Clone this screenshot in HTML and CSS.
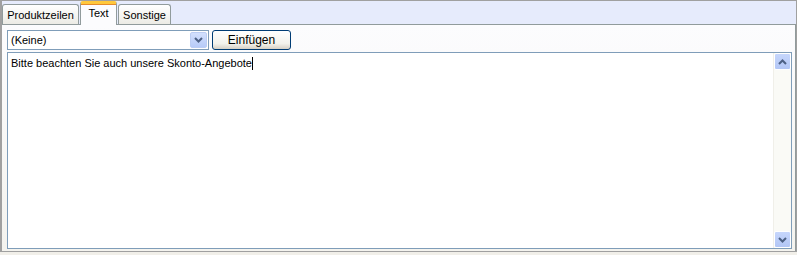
FILE: index.html
```html
<!DOCTYPE html>
<html lang="de">
<head>
    <meta charset="UTF-8">
    <title>Text</title>
    <link rel="stylesheet" href="styles.css">
</head>
<body>
    <div class="window">
        <div class="tabstrip">
            <div class="tab tab-products">Produktzeilen</div>
            <div class="tab tab-text active">Text</div>
            <div class="tab tab-other">Sonstige</div>
        </div>

        <div class="panel">
            <div class="toolbar">
                <div class="combo">
                    <span class="combo-value">(Keine)</span>
                    <span class="combo-btn">
                        <svg width="9" height="6" viewBox="0 0 9 6"><path d="M1 1 L4.5 4.5 L8 1" fill="none" stroke="#4d6185" stroke-width="2"/></svg>
                    </span>
                </div>
                <button class="btn">Einfügen</button>
            </div>

            <div class="editor">
                <div class="editor-text">Bitte beachten Sie auch unsere Skonto-Angebote<span class="caret"></span></div>
                <div class="scrollbar">
                    <span class="scroll-btn">
                        <svg width="9" height="6" viewBox="0 0 9 6"><path d="M1 5 L4.5 1.5 L8 5" fill="none" stroke="#4d6185" stroke-width="2"/></svg>
                    </span>
                    <span class="scroll-btn">
                        <svg width="9" height="6" viewBox="0 0 9 6"><path d="M1 1 L4.5 4.5 L8 1" fill="none" stroke="#4d6185" stroke-width="2"/></svg>
                    </span>
                </div>
            </div>
        </div>
    </div>
</body>
</html>
```

FILE: styles.css
```css
body {
    margin: 0;
    padding: 0;
    background-color: #f1efe9;
    font-family: "Liberation Sans", Arial, sans-serif;
    font-size: 11px;
    color: #000;
}
.window {
    width: 797px;
    height: 252px;
    box-sizing: border-box;
    border: 1px solid #a0a0a0;
    border-left-width: 2px;
    background-color: #e6ebfc;
    display: flex;
    flex-direction: column;
}
.tabstrip {
    display: flex;
    align-items: flex-end;
    height: 23px;
    position: relative;
    z-index: 1;
}
.tab {
    height: 20px;
    box-sizing: border-box;
    padding-top: 4px;
    margin-right: 1px;
    text-align: center;
    border: 1px solid #919b9c;
    border-bottom: none;
    border-radius: 3px 3px 0 0;
    background: linear-gradient(#ffffff, #ecebe5);
}
.tab-products {
    width: 77px;
}
.tab-text {
    width: 37px;
}
.tab-other {
    width: 53px;
}
.tab.active {
    height: 24px;
    margin-bottom: -1px;
    padding-top: 3px;
    border-top: 3px solid #ffc83c;
    background: #fcfcfe;
    box-shadow: inset 0 1px 0 #e68b2c;
}
.panel {
    flex: 1;
    border-top: 1px solid #919b9c;
    border-right: 1px solid #919b9c;
    background: linear-gradient(#fcfcfe, #f4f3ee);
    padding: 5px 3px 2px 5px;
    display: flex;
    flex-direction: column;
    gap: 2px;
}
.toolbar {
    display: flex;
    gap: 3px;
    height: 20px;
}
.combo {
    width: 202px;
    box-sizing: border-box;
    border: 1px solid #7f9db9;
    background: #fff;
    display: flex;
    align-items: center;
    justify-content: space-between;
    padding: 0 1px 0 3px;
}
.combo-btn {
    width: 17px;
    height: 16px;
    box-sizing: border-box;
    border: 1px solid #bccdf3;
    border-radius: 2px;
    background: linear-gradient(#d3e0fd, #b7cbf8);
    display: flex;
    align-items: center;
    justify-content: center;
}
.btn {
    width: 79px;
    height: 20px;
    box-sizing: border-box;
    border: 1px solid #003c74;
    border-radius: 3px;
    background: linear-gradient(#ffffff, #f3f2ec 70%, #d6d0c5);
    font-family: "Liberation Sans", Arial, sans-serif;
    font-size: 12px;
    padding: 0;
}
.editor {
    flex: 1;
    width: 785px;
    box-sizing: border-box;
    border: 1px solid #7f9db9;
    background: #fff;
    display: flex;
}
.editor-text {
    flex: 1;
    padding: 4px 3px;
    line-height: 13px;
}
.caret {
    display: inline-block;
    width: 1px;
    height: 13px;
    background: #000;
    vertical-align: top;
}
.scrollbar {
    width: 17px;
    background: #fafaf6;
    border-left: 1px solid #f0efe9;
    display: flex;
    flex-direction: column;
    justify-content: space-between;
}
.scroll-btn {
    height: 17px;
    box-sizing: border-box;
    border: 1px solid #fff;
    border-radius: 2px;
    background: linear-gradient(#c6d6fc, #b2c6f5);
    display: flex;
    align-items: center;
    justify-content: center;
}
```
